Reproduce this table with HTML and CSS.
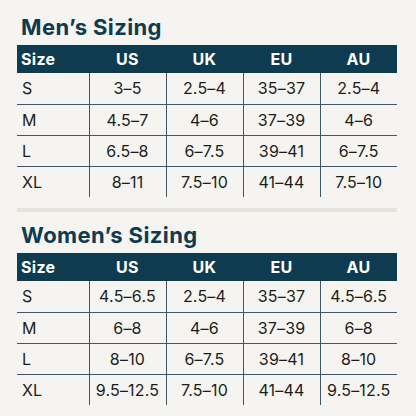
FILE: index.html
```html
<!DOCTYPE html>
<html lang="en">

<head>
	<meta charset="UTF-8">
	<meta name="viewport" content="width=device-width, initial-scale=1.0">
	<title>Sizing Chart</title>
	<link rel="stylesheet" href="styles.css">
</head>

<body>

	<div class="sizing">
		<h2 class="sizing-title">Men’s Sizing</h2>
		<table class="size-table">
			<colgroup>
				<col class="col-size">
				<col><col><col><col>
			</colgroup>
			<thead>
				<tr><th>Size</th><th>US</th><th>UK</th><th>EU</th><th>AU</th></tr>
			</thead>
			<tbody>
				<tr><td>S</td><td>3–5</td><td>2.5–4</td><td>35–37</td><td>2.5–4</td></tr>
				<tr><td>M</td><td>4.5–7</td><td>4–6</td><td>37–39</td><td>4–6</td></tr>
				<tr><td>L</td><td>6.5–8</td><td>6–7.5</td><td>39–41</td><td>6–7.5</td></tr>
				<tr><td>XL</td><td>8–11</td><td>7.5–10</td><td>41–44</td><td>7.5–10</td></tr>
			</tbody>
		</table>
	</div>

	<div class="divider"></div>

	<div class="sizing sizing-women">
		<h2 class="sizing-title">Women’s Sizing</h2>
		<table class="size-table">
			<colgroup>
				<col class="col-size">
				<col><col><col><col>
			</colgroup>
			<thead>
				<tr><th>Size</th><th>US</th><th>UK</th><th>EU</th><th>AU</th></tr>
			</thead>
			<tbody>
				<tr><td>S</td><td>4.5–6.5</td><td>2.5–4</td><td>35–37</td><td>4.5–6.5</td></tr>
				<tr><td>M</td><td>6–8</td><td>4–6</td><td>37–39</td><td>6–8</td></tr>
				<tr><td>L</td><td>8–10</td><td>6–7.5</td><td>39–41</td><td>8–10</td></tr>
				<tr><td>XL</td><td>9.5–12.5</td><td>7.5–10</td><td>41–44</td><td>9.5–12.5</td></tr>
			</tbody>
		</table>
	</div>

</body>

</html>
```

FILE: styles.css
```css
* {
	margin: 0;
	padding: 0;
	box-sizing: border-box;
}

body {
	background: #f5f4f0;
	font-family: 'Inter', 'Open Sans', Arial, sans-serif;
	color: #1c1c1c;
	padding: 0 19px 0 17px;
}

.sizing {
	padding-top: 15px;
}

.sizing-women {
	padding-top: 11px;
}

.sizing-title {
	font-size: 22px;
	line-height: 24px;
	font-weight: 700;
	color: #0e3b50;
	padding-left: 4px;
	margin-bottom: 6px;
	letter-spacing: 0.4px;
}

.size-table {
	width: 100%;
	table-layout: fixed;
	border-collapse: collapse;
	font-size: 16px;
}

.col-size {
	width: 72px;
}

.size-table th {
	background: #0e3b50;
	color: #fff;
	font-weight: 700;
	height: 28px;
	text-align: center;
	letter-spacing: 0.3px;
}

.size-table th:first-child {
	text-align: left;
	padding-left: 4px;
}

.size-table td {
	height: 31px;
	text-align: center;
	border-left: 1px solid #3c5869;
	border-top: 1px solid #3c5869;
	letter-spacing: 0.2px;
}

.size-table tr:first-child td {
	border-top: 0;
}

.size-table td:first-child {
	border-left: 0;
	text-align: left;
	padding-left: 5px;
}

.divider {
	height: 4px;
	background: #e6e3dd;
	margin-top: 11px;
}
```
